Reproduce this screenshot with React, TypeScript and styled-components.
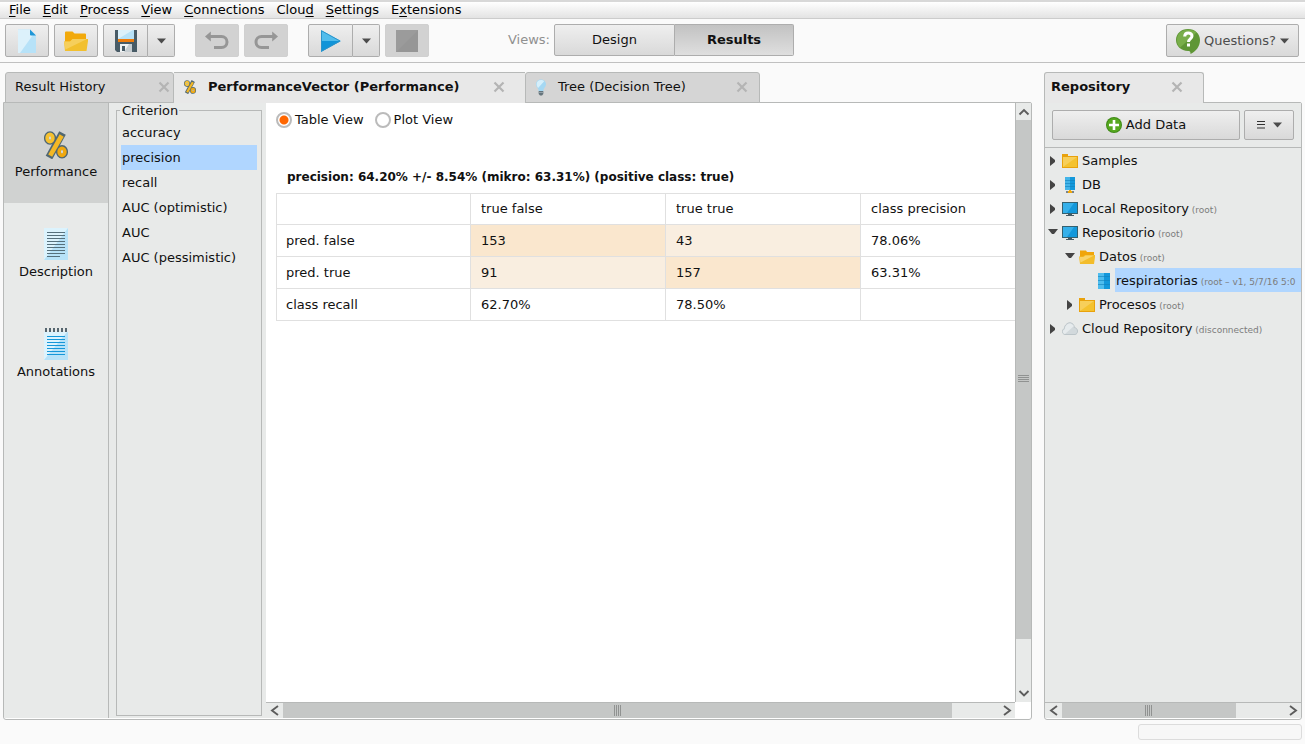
import React, { useState } from 'react';
import styled, { createGlobalStyle, css } from 'styled-components';

const LINE = '#b7b9b8';
const PANEL = '#e8eae9';
const SELECT = '#b0d6ff';

const GlobalStyle = createGlobalStyle`
  *, *::before, *::after { box-sizing: border-box; }
  body {
    margin: 0;
    background: #fafafa;
    color: #111;
    font: 13px/16px "DejaVu Sans", Verdana, sans-serif;
  }
  button { font: inherit; color: inherit; padding: 0; margin: 0; cursor: pointer; }
  ul { list-style: none; margin: 0; padding: 0; }
  svg { display: block; flex: none; }
`;

const Page = styled.div`
  min-height: 100vh;
  display: flex;
  flex-direction: column;
`;

/* ---------- menu bar and toolbar ---------- */

const MenuBar = styled.nav`
  display: flex;
  height: 19px;
  padding: 0 3px;
  border-top: 2px solid #d8d8d8;
  border-bottom: 1px solid #cccccc;
  background: linear-gradient(#ffffff, #e3e3e3);
`;

const MenuItem = styled.button`
  border: 0;
  background: none;
  padding: 0 6px;
  line-height: 16px;
  color: #000;
  u { text-underline-offset: 2px; }
`;

const Toolbar = styled.header`
  display: grid;
  grid-template-columns: 1fr auto 1fr;
  align-items: start;
  height: 44px;
  padding: 5px 6px 0 5px;
  border-bottom: 1px solid #c0c0c0;
`;

const ToolGroup = styled.div`
  display: flex;
  gap: 5px;
`;

const Tools = styled.div`
  display: flex;
  gap: 20px;
`;

const raised = css`
  border: 1px solid #adadad;
  border-radius: 2px;
  background: linear-gradient(#efefef, #d9d9d9);
`;

const ToolButton = styled.button<{ $narrow?: boolean }>`
  ${raised}
  display: flex;
  align-items: center;
  justify-content: center;
  width: ${(p) => (p.$narrow ? '28px' : '44px')};
  height: 33px;
  &:disabled { background: #d2d2d2; border-color: #d0d0d0; }
`;

const SplitButton = styled.div`
  display: flex;
  ${ToolButton}:first-child { width: 45px; border-radius: 2px 0 0 2px; }
  ${ToolButton}:last-child { border-left: 0; width: 27px; border-radius: 0 2px 2px 0; }
`;

const Views = styled.div`
  display: flex;
  align-items: center;
  gap: 4px;
  padding-right: 2px;
  color: #909090;
`;

const ViewButtons = styled.div`
  display: flex;
`;

const ViewButton = styled.button<{ $on?: boolean }>`
  ${raised}
  height: 32px;
  color: #111;
  ${(p) =>
    p.$on
      ? 'width: 119px; background: linear-gradient(#c2c2c2, #dfdfdf); font-weight: bold; border-left: 0; border-radius: 0 2px 2px 0;'
      : 'width: 121px; border-radius: 2px 0 0 2px;'}
`;

const QuestionsButton = styled.button`
  ${raised}
  justify-self: end;
  display: flex;
  align-items: center;
  width: 133px;
  height: 33px;
  padding: 0 9px;
  gap: 4px;
  color: #4c4c4c;
  svg:last-child { margin-left: auto; }
`;

/* ---------- work area ---------- */

const Workspace = styled.main`
  flex: 1;
  display: flex;
  gap: 12px;
  padding: 9px 3px 0;
`;

const Dock = styled.section<{ $side?: boolean }>`
  display: flex;
  flex-direction: column;
  min-width: 0;
  flex: ${(p) => (p.$side ? '0 0 258px' : '1')};
`;

const Tabs = styled.div<{ $inset?: boolean }>`
  position: relative;
  z-index: 1;
  display: flex;
  height: 31px;
  margin-bottom: -1px;
  padding-left: ${(p) => (p.$inset ? '2px' : '0')};
`;

const Tab = styled.div<{ $w: number; $left?: number; $right?: number; $active?: boolean; $joined?: boolean }>`
  display: flex;
  align-items: center;
  width: ${(p) => p.$w}px;
  padding: 0 ${(p) => p.$right ?? 11}px 1px ${(p) => p.$left ?? 9}px;
  border: 1px solid ${LINE};
  border-radius: 3px 3px 0 0;
  background: #d5d5d5;
  white-space: nowrap;
  ${(p) => p.$active && 'background: #e8e8e8; border-bottom: 0; font-weight: bold; padding-bottom: 2px;'}
  ${(p) => p.$joined && 'border-left: 0; border-right: 0; border-radius: 0;'}
`;

const TabLabel = styled.button`
  display: flex;
  align-items: center;
  border: 0;
  background: none;
  gap: 12px;
  white-space: nowrap;
`;

const CloseButton = styled.button`
  margin-left: auto;
  border: 0;
  background: none;
`;

const Panel = styled.div<{ $column?: boolean }>`
  flex: 1;
  display: flex;
  flex-direction: ${(p) => (p.$column ? 'column' : 'row')};
  min-width: 0;
  padding-bottom: 1px;
  border: 1px solid ${LINE};
  border-radius: 0 2px 3px 3px;
  background: #fff;
`;

const Sidebar = styled.div`
  flex: 0 0 105px;
  border-right: 1px solid ${LINE};
  background: ${PANEL};
`;

const SideButton = styled.button<{ $on?: boolean }>`
  display: flex;
  flex-direction: column;
  align-items: center;
  gap: 4px;
  width: 100%;
  height: 100px;
  padding-top: 25px;
  border: 0;
  background: ${(p) => (p.$on ? '#d0d2d1' : 'transparent')};
`;

const CriterionPane = styled.div`
  flex: 0 0 157px;
  display: flex;
  padding: 0 4px 2px 7px;
  background: ${PANEL};
`;

const Criterion = styled.fieldset`
  flex: 1;
  min-width: 0;
  margin: 0;
  padding: 2px 4px;
  border: 1px solid ${LINE};
  legend {
    padding: 0 1px 0 2px;
    margin-left: -1px;
    line-height: 15px;
  }
`;

const CriterionItem = styled.button<{ $on?: boolean }>`
  display: block;
  width: 100%;
  height: 25px;
  padding: 0 1px;
  border: 0;
  text-align: left;
  background: ${(p) => (p.$on ? SELECT : 'transparent')};
`;

const ResultPane = styled.div`
  flex: 1;
  min-width: 0;
  display: grid;
  grid-template-columns: minmax(0, 1fr) 16px;
  grid-template-rows: 1fr 16px;
`;

const ResultView = styled.div`
  overflow: hidden;
  padding: 9px 0 0 10px;
`;

const RadioRow = styled.div`
  display: flex;
  gap: 11px;
  label { display: flex; align-items: center; gap: 3px; }
`;

const Radio = styled.input`
  appearance: none;
  width: 16px;
  height: 16px;
  margin: 0;
  border: 2px solid #bbbbbb;
  border-radius: 50%;
  background: #fff;
  &:checked { background: radial-gradient(circle, #ff6600 4px, #fff 5px); }
`;

const Summary = styled.h1`
  margin: 41px 0 8px 11px;
  font-size: 12px;
  line-height: 16px;
  white-space: nowrap;
`;

const Matrix = styled.table`
  width: 780px;
  table-layout: fixed;
  border-collapse: collapse;
  th, td {
    width: 195px;
    height: 32px;
    padding: 0 10px;
    border: 1px solid #e0e0e0;
    font-weight: normal;
    text-align: left;
  }
  tbody th { padding: 0 9px; }
  thead td { width: 194px; }
  thead th, thead td { height: 31px; }
`;

const Cell = styled.td<{ $tone?: 'strong' | 'soft' }>`
  background: ${(p) => (p.$tone === 'strong' ? '#fae7ce' : p.$tone === 'soft' ? '#f9eee0' : 'transparent')};
`;

/* ---------- scroll bars ---------- */

const Bar = styled.div<{ $vertical?: boolean }>`
  display: flex;
  flex-direction: ${(p) => (p.$vertical ? 'column' : 'row')};
  background: ${PANEL};
  ${(p) =>
    p.$vertical
      ? `width: 16px; border-left: 1px solid ${LINE};`
      : `height: 16px; border-top: 1px solid ${LINE};`}
`;

const BarArrow = styled.button`
  display: flex;
  align-items: center;
  justify-content: center;
  flex: 0 0 17px;
  border: 0;
  background: none;
`;

const Track = styled.div<{ $vertical?: boolean }>`
  flex: 1;
  display: flex;
  flex-direction: ${(p) => (p.$vertical ? 'column' : 'row')};
`;

const Thumb = styled.div<{ $size: number }>`
  flex: 0 0 ${(p) => p.$size}%;
  display: flex;
  align-items: center;
  justify-content: center;
  background: #c5c7c6;
`;

/* ---------- repository ---------- */

const RepoTools = styled.div`
  display: flex;
  gap: 4px;
  padding: 7px;
  border-bottom: 1px solid ${LINE};
  background: ${PANEL};
`;

const RepoButton = styled.button<{ $menu?: boolean }>`
  ${raised}
  flex: ${(p) => (p.$menu ? '0 0 50px' : '1')};
  display: flex;
  align-items: center;
  justify-content: center;
  gap: ${(p) => (p.$menu ? '8px' : '4px')};
  height: 30px;
`;

const Tree = styled.ul`
  flex: 1;
  overflow: hidden;
  background: ${PANEL};
`;

const TreeRow = styled.li<{ $level: number }>`
  display: flex;
  align-items: center;
  height: 24px;
  padding-top: 2px;
  padding-left: ${(p) => 3 + p.$level * 17}px;
`;

const Twisty = styled.span`
  flex: 0 0 14px;
`;

const TreeLabel = styled.button<{ $on?: boolean }>`
  flex: 1 0 auto;
  height: 24px;
  margin: -2px 0 0 3px;
  padding: 2px 0 0 1px;
  border: 0;
  text-align: left;
  white-space: nowrap;
  background: ${(p) => (p.$on ? SELECT : 'transparent')};
  small { font-size: 9px; color: #7c7c7c; }
`;

const StatusBar = styled.footer`
  display: flex;
  justify-content: flex-end;
  padding: 4px 3px;
`;

const Progress = styled.div`
  width: 164px;
  height: 16px;
  border: 1px solid #dcdcdc;
  border-radius: 3px;
  background: #f7f7f7;
`;

/* ---------- drawings ---------- */

const DownArrow = () => (
  <svg width="9" height="6" viewBox="0 0 9 6"><path d="M0 0.5h9L4.5 5.5z" fill="#4c4c4c" /></svg>
);

const Cross = () => (
  <svg width="12" height="12" viewBox="0 0 12 12"><path d="M1.5 1.5l9 9M10.5 1.5l-9 9" stroke="#b4b4b4" strokeWidth="2.2" /></svg>
);

const NewIcon = () => (
  <svg width="18" height="24" viewBox="0 0 18 24">
    <path d="M0 0.5h12l6 6V24H0z" fill="#b7e2f8" />
    <path d="M0 0.5h12l4 4L2 24H0z" fill="#dcf1fb" />
    <path d="M12 0.5l6 6h-5q-1 0-1-1z" fill="#1f96d6" />
  </svg>
);

const OpenIcon = () => (
  <svg width="24" height="22" viewBox="0 0 24 22">
    <path d="M1 2.5Q1 1.500 2 1.500h6.500l2 2H21q1 0 1 1V20H1z" fill="#f2a90b" />
    <path d="M0 11.500h6l2.500-2.500H24v2l-1.500 10H1z" fill="#f2c02f" />
    <path d="M0 11.500h6l2.500-2.500H23L1.500 19.500z" fill="#f6cf5c" />
  </svg>
);

const SaveIcon = () => (
  <svg width="22" height="22" viewBox="0 0 22 22">
    <path d="M0 0h22v22H2l-2-2z" fill="#485b66" />
    <path d="M3 0h16v9H3z" fill="#b7e2f8" />
    <path d="M3 0h15L3 9z" fill="#dcf1fb" />
    <path d="M3 9h16v3H3z" fill="#ef7d0c" />
    <path d="M5 14h12v8H5z" fill="#c6cdd1" />
    <path d="M5 14h9l-5 8H5z" fill="#eff2f3" />
    <path d="M7 16h3v5H7z" fill="#485b66" />
  </svg>
);

const UndoIcon = ({ flip }: { flip?: boolean }) => (
  <svg width="24" height="20" viewBox="0 0 24 20">
    <g transform={flip ? 'matrix(-1 0 0 1 24 0)' : undefined}>
      <path d="M5 5.500h11.500a5.500 5.500 0 0 1 0 11H9" fill="none" stroke="#969696" strokeWidth="3" />
      <path d="M0 5.500L5.800 0.500v10z" fill="#969696" />
    </g>
  </svg>
);

const PlayIcon = () => (
  <svg width="20" height="22" viewBox="0 0 20 22">
    <path d="M0 0l20 11H0z" fill="#52bdec" />
    <path d="M0 11h20L0 22z" fill="#1194d8" />
    <path d="M0.500 0.800L19 11 0.500 21.200z" fill="none" stroke="#2b93c9" strokeWidth="1" />
  </svg>
);

const StopIcon = () => (
  <svg width="22" height="22" viewBox="0 0 22 22">
    <path d="M0 0h22v22H0z" fill="#969696" />
    <path d="M0 0h22L0 22z" fill="#9b9b9b" />
  </svg>
);

const HelpIcon = () => (
  <svg width="24" height="26" viewBox="0 0 24 26">
    <path d="M12 1C5 1 0 5.800 0 12s5 10.500 12 11c1.500 0 2.500 0 2.500 3 5-2.500 9.500-7 9.500-14C24 5.800 19 1 12 1z" fill="#5f9636" />
    <path d="M12 1.800C5.500 1.800 1 6 1 12c0 3 1 5.500 3.200 7.500L20.500 4.500C18.500 2.700 15.500 1.800 12 1.800z" fill="#79ae4a" />
    <path d="M8.700 8.500c0-5 7.300-4.500 7.300-.5 0 3-3.500 2.800-3.500 6" fill="none" stroke="#fff" strokeWidth="3" />
    <path d="M11 15.500h3v3h-3z" fill="#fff" />
  </svg>
);

const PercentIcon = ({ width, height }: { width: number; height: number }) => (
  <svg width={width} height={height} viewBox="0 0 24 28">
    <g fill="none">
      <g stroke="#516872" strokeWidth="6.500">
        <ellipse cx="6" cy="7" rx="2.800" ry="3.500" />
        <ellipse cx="18" cy="20.800" rx="2.800" ry="3.500" />
        <path d="M18.500 2L5 26.500" strokeWidth="7.500" />
      </g>
      <path d="M17.700 4.500L6.200 24.600" stroke="#f4b824" strokeWidth="4.600" />
      <ellipse cx="6" cy="7" rx="2.800" ry="3.500" stroke="#f6c12f" strokeWidth="3.800" />
      <ellipse cx="18" cy="20.800" rx="2.800" ry="3.500" stroke="#f0a80f" strokeWidth="3.800" />
      <ellipse cx="6" cy="7" rx="1" ry="1.800" fill="#dfe1dc" />
      <ellipse cx="18" cy="20.800" rx="1" ry="1.800" fill="#dfe1dc" />
    </g>
  </svg>
);

const PerformanceIcon = () => (
  <svg width="24" height="32" viewBox="0 0 24 32">
    <svg y="3" width="24" height="28"><PercentIcon width={24} height={28} /></svg>
  </svg>
);

const BulbIcon = () => (
  <svg width="10" height="17" viewBox="0 0 10 17">
    <path d="M5 0.500C1.800 0.500 0 2.800 0 5.200 0 8 2.500 9 2.700 12h4.600C7.500 9 10 8 10 5.200 10 2.800 8.200 0.500 5 0.500z" fill="#a5d8f3" />
    <path d="M5 1C2.300 1 0.600 2.800 0.600 5.200c0 1.600.8 2.700 1.500 3.800L8.200 2.200C7.500 1.400 6.300 1 5 1z" fill="#d6effb" />
    <path d="M2.700 12h4.600v3L6 16.500H4L2.700 15z" fill="#65747c" />
    <path d="M2.700 13.500h4.600" stroke="#94a1a7" />
  </svg>
);

const Sheet = () => (
  <>
    <path d="M0 0h24v32H0z" fill="#b7e2f8" />
    <path d="M0 0h24L0 32z" fill="#dcf3fd" />
  </>
);

const DescriptionIcon = () => (
  <svg width="24" height="32" viewBox="0 0 24 32">
    <Sheet />
    <path d="M3 4.500h18M3 7.500h18M3 10.500h18M3 13.500h18M3 16.500h18M3 19.500h18M3 22.500h18M3 25.500h18M3 28.500h13" stroke="#56707c" />
  </svg>
);

const AnnotationsIcon = () => (
  <svg width="24" height="32" viewBox="0 0 24 32">
    <path d="M0 4h24v28H0z" fill="#b7e2f8" />
    <path d="M0 4h23L0 32z" fill="#dcf3fd" />
    <path d="M3 8.500h18M3 11.500h18M3 14.500h18M3 17.500h18M3 20.500h18M3 23.500h18M3 26.500h18" stroke="#1597d9" />
    <path d="M2 0v4M6 0v4M10 0v4M14 0v4M18 0v4M22 0v4" stroke="#56666f" strokeWidth="2" />
  </svg>
);

const PlusIcon = () => (
  <svg width="16" height="16" viewBox="0 0 16 16">
    <circle cx="8" cy="8" r="8" fill="#3f8a17" />
    <circle cx="8" cy="8" r="7" fill="#56a81f" />
    <path d="M8 3v10M3 8h10" stroke="#fff" strokeWidth="2.600" />
  </svg>
);

const MenuIcon = () => (
  <svg width="8" height="8" viewBox="0 0 8 8"><path d="M0 0.500h8M0 3.500h8M0 7h8" stroke="#333" /></svg>
);

const FolderIcon = () => (
  <svg width="16" height="16" viewBox="0 0 16 16">
    <path d="M0 1h6v2h10v12H0z" fill="#e9a20c" />
    <path d="M1 4h14v10H1z" fill="#f4c22f" />
    <path d="M1 4h14L1 14z" fill="#f7cf5a" />
  </svg>
);

const OpenFolderIcon = () => (
  <svg width="16" height="16" viewBox="0 0 16 16">
    <path d="M1 1.500h6l1 1.500h7v11H1z" fill="#f0a50a" />
    <path d="M0 7.500h4L6 6h10v2l-1 7H1z" fill="#f3bd2b" />
    <path d="M0.500 8h4l2-1.500H15L1.500 13.500z" fill="#f8d36a" />
  </svg>
);

const DataIcon = ({ plug }: { plug?: boolean }) => (
  <svg width="16" height="16" viewBox="0 0 16 16">
    {plug ? (
      <>
        <path d="M3 0h5v13H3z" fill="#43b4e8" />
        <path d="M8 0h5v13H8z" fill="#1398db" />
        <path d="M3 3.500h10M3 6.500h10M3 9.500h10" stroke="#1280bb" strokeOpacity="0.6" />
        <path d="M7 13h2v1H7z" fill="#f2a90b" />
        <path d="M4 14h8v2H4z" fill="#7a868c" />
        <path d="M6 14h4v2H6z" fill="#f2a90b" />
      </>
    ) : (
      <>
        <path d="M2 0h6v16H2z" fill="#4fbdee" />
        <path d="M8 0h6v16H8z" fill="#1398db" />
        <path d="M2 3.500h12M2 7.500h12M2 11.500h12" stroke="#1280bb" strokeOpacity="0.6" />
      </>
    )}
  </svg>
);

const MonitorIcon = () => (
  <svg width="16" height="16" viewBox="0 0 16 16">
    <path d="M0 1h16v12H0z" fill="#34606f" />
    <path d="M1 2h14v10H1z" fill="#1398db" />
    <path d="M1 2h11L5 12H1z" fill="#35b0ea" />
    <path d="M6 13h4v1h2v1H4v-1h2z" fill="#455a64" />
  </svg>
);

const CloudIcon = () => (
  <svg width="16" height="16" viewBox="0 0 16 16">
    <path d="M3 13.500C-.5 13-.5 8.500 2.300 7.800 2.500 3.500 6.500 1 9 2c2 .5 3.300 2.300 3.300 4.500C16.500 7 16.500 13 13 13.500z" fill="#d2d9dc" stroke="#bcc5c9" />
    <path d="M3 13C.5 12.500.3 9 2.800 8.200 3 4 6.500 2 9 2.600L12 5z" fill="#e6ebed" />
  </svg>
);

const Twist = ({ open }: { open: boolean }) => (
  <svg width="10" height="10" viewBox="0 0 10 10">
    <path d={open ? 'M0 1h10L6 6H4z' : 'M2 0v10l5-4V4z'} fill="#444" />
  </svg>
);

const chevrons = {
  up: 'M1.500 8.500L6 4 10.500 8.500',
  down: 'M1.500 3L6 7.500 10.500 3',
  left: 'M9 1L3 5.500l6 4.500',
  right: 'M3 1L9 5.500l-6 4.500',
};

const Chevron = ({ dir }: { dir: keyof typeof chevrons }) => (
  <svg width="12" height="12" viewBox="0 0 12 12">
    <path d={chevrons[dir]} fill="none" stroke="#5c5c5c" strokeWidth="1.900" />
  </svg>
);

const ScrollBar = ({ vertical, size }: { vertical?: boolean; size: number }) => (
  <Bar $vertical={vertical}>
    <BarArrow aria-label="Scroll back"><Chevron dir={vertical ? 'up' : 'left'} /></BarArrow>
    <Track $vertical={vertical}>
      <Thumb $size={size}>
        <svg width={vertical ? 11 : 8} height={vertical ? 8 : 11}>
          <path
            d={vertical ? 'M0 .5h11M0 2.500h11M0 4.500h11M0 6.500h11' : 'M.5 0v11M2.500 0v11M4.500 0v11M6.500 0v11'}
            stroke="#909291"
          />
        </svg>
      </Thumb>
    </Track>
    <BarArrow aria-label="Scroll on"><Chevron dir={vertical ? 'down' : 'right'} /></BarArrow>
  </Bar>
);

/* ---------- data ---------- */

const menus: [string, string, string][] = [
  ['', 'F', 'ile'],
  ['', 'E', 'dit'],
  ['', 'P', 'rocess'],
  ['', 'V', 'iew'],
  ['', 'C', 'onnections'],
  ['Clou', 'd', ''],
  ['', 'S', 'ettings'],
  ['E', 'x', 'tensions'],
];

const criteria = ['accuracy', 'precision', 'recall', 'AUC (optimistic)', 'AUC', 'AUC (pessimistic)'];

const sections = [
  { name: 'Performance', icon: <PerformanceIcon /> },
  { name: 'Description', icon: <DescriptionIcon /> },
  { name: 'Annotations', icon: <AnnotationsIcon /> },
];

type Tone = 'strong' | 'soft' | undefined;
const rows: { name: string; cells: [string, Tone][] }[] = [
  { name: 'pred. false', cells: [['153', 'strong'], ['43', 'soft'], ['78.06%', undefined]] },
  { name: 'pred. true', cells: [['91', 'soft'], ['157', 'strong'], ['63.31%', undefined]] },
  { name: 'class recall', cells: [['62.70%', undefined], ['78.50%', undefined], ['', undefined]] },
];

const entries: { name: string; note?: string; level: number; open?: boolean; leaf?: boolean; icon: React.ReactNode }[] = [
  { name: 'Samples', level: 0, icon: <FolderIcon /> },
  { name: 'DB', level: 0, icon: <DataIcon plug /> },
  { name: 'Local Repository', note: '(root)', level: 0, icon: <MonitorIcon /> },
  { name: 'Repositorio', note: '(root)', level: 0, open: true, icon: <MonitorIcon /> },
  { name: 'Datos', note: '(root)', level: 1, open: true, icon: <OpenFolderIcon /> },
  { name: 'respiratorias', note: '(root – v1, 5/7/16 5:0', level: 2, leaf: true, icon: <DataIcon /> },
  { name: 'Procesos', note: '(root)', level: 1, icon: <FolderIcon /> },
  { name: 'Cloud Repository', note: '(disconnected)', level: 0, icon: <CloudIcon /> },
];

export default function App() {
  const [criterion, setCriterion] = useState('precision');
  const [section, setSection] = useState('Performance');
  const [entry, setEntry] = useState('respiratorias');

  return (
    <Page>
      <GlobalStyle />
      <MenuBar>
        {menus.map(([before, key, after]) => (
          <MenuItem key={before + key + after}>{before}<u>{key}</u>{after}</MenuItem>
        ))}
      </MenuBar>

      <Toolbar>
        <Tools>
          <ToolGroup>
            <ToolButton aria-label="New process"><NewIcon /></ToolButton>
            <ToolButton aria-label="Open process"><OpenIcon /></ToolButton>
            <SplitButton>
              <ToolButton aria-label="Save"><SaveIcon /></ToolButton>
              <ToolButton aria-label="Save options" $narrow><DownArrow /></ToolButton>
            </SplitButton>
          </ToolGroup>
          <ToolGroup>
            <ToolButton aria-label="Undo" disabled><UndoIcon /></ToolButton>
            <ToolButton aria-label="Redo" disabled><UndoIcon flip /></ToolButton>
          </ToolGroup>
          <ToolGroup>
            <SplitButton>
              <ToolButton aria-label="Run"><PlayIcon /></ToolButton>
              <ToolButton aria-label="Run options" $narrow><DownArrow /></ToolButton>
            </SplitButton>
            <ToolButton aria-label="Stop" disabled><StopIcon /></ToolButton>
          </ToolGroup>
        </Tools>
        <Views>
          <span>Views:</span>
          <ViewButtons>
            <ViewButton>Design</ViewButton>
            <ViewButton $on>Results</ViewButton>
          </ViewButtons>
        </Views>
        <QuestionsButton><HelpIcon />Questions?<DownArrow /></QuestionsButton>
      </Toolbar>

      <Workspace>
        <Dock>
          <Tabs $inset>
            <Tab $w={169} $right={3}>
              <TabLabel>Result History</TabLabel>
              <CloseButton aria-label="Close Result History"><Cross /></CloseButton>
            </Tab>
            <Tab $w={351} $left={10} $right={20} $active $joined>
              <TabLabel><PercentIcon width={12} height={14} />PerformanceVector (Performance)</TabLabel>
              <CloseButton aria-label="Close PerformanceVector"><Cross /></CloseButton>
            </Tab>
            <Tab $w={235} $left={10}>
              <TabLabel><BulbIcon />Tree (Decision Tree)</TabLabel>
              <CloseButton aria-label="Close Tree"><Cross /></CloseButton>
            </Tab>
          </Tabs>
          <Panel>
            <Sidebar>
              {sections.map((s) => (
                <SideButton key={s.name} $on={s.name === section} onClick={() => setSection(s.name)}>
                  {s.icon}
                  {s.name}
                </SideButton>
              ))}
            </Sidebar>
            <CriterionPane>
              <Criterion>
                <legend>Criterion</legend>
                <ul>
                  {criteria.map((c) => (
                    <li key={c}>
                      <CriterionItem $on={c === criterion} onClick={() => setCriterion(c)}>{c}</CriterionItem>
                    </li>
                  ))}
                </ul>
              </Criterion>
            </CriterionPane>
            <ResultPane>
              <ResultView>
                <RadioRow>
                  <label><Radio type="radio" name="view" defaultChecked />Table View</label>
                  <label><Radio type="radio" name="view" />Plot View</label>
                </RadioRow>
                <Summary>precision: 64.20% +/- 8.54% (mikro: 63.31%) (positive class: true)</Summary>
                <Matrix>
                  <thead>
                    <tr>
                      <td />
                      <th scope="col">true false</th>
                      <th scope="col">true true</th>
                      <th scope="col">class precision</th>
                    </tr>
                  </thead>
                  <tbody>
                    {rows.map((r) => (
                      <tr key={r.name}>
                        <th scope="row">{r.name}</th>
                        {r.cells.map(([text, tone], i) => (
                          <Cell key={i} $tone={tone}>{text}</Cell>
                        ))}
                      </tr>
                    ))}
                  </tbody>
                </Matrix>
              </ResultView>
              <ScrollBar vertical size={91.8} />
              <ScrollBar size={93.6} />
            </ResultPane>
          </Panel>
        </Dock>

        <Dock $side>
          <Tabs>
            <Tab $w={160} $left={6} $right={20} $active>
              <TabLabel>Repository</TabLabel>
              <CloseButton aria-label="Close Repository"><Cross /></CloseButton>
            </Tab>
          </Tabs>
          <Panel $column>
            <RepoTools>
              <RepoButton><PlusIcon />Add Data</RepoButton>
              <RepoButton $menu aria-label="Repository menu"><MenuIcon /><DownArrow /></RepoButton>
            </RepoTools>
            <Tree>
              {entries.map((e) => (
                <TreeRow key={e.name} $level={e.level}>
                  <Twisty>{!e.leaf && <Twist open={!!e.open} />}</Twisty>
                  {e.icon}
                  <TreeLabel $on={e.name === entry} onClick={() => setEntry(e.name)}>
                    {e.name}{e.note && <small> {e.note}</small>}
                  </TreeLabel>
                </TreeRow>
              ))}
            </Tree>
            <ScrollBar size={78.4} />
          </Panel>
        </Dock>
      </Workspace>

      <StatusBar><Progress role="progressbar" aria-label="Progress" /></StatusBar>
    </Page>
  );
}
